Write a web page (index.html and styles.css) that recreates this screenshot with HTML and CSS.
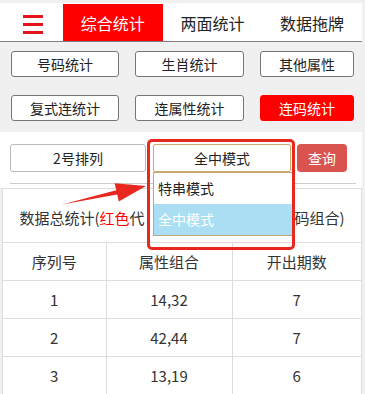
FILE: index.html
```html
<!DOCTYPE html>
<html>
<head lang="zh">
    <meta charset="UTF-8">
    <title>连码统计</title>
    <link rel="stylesheet" href="styles.css">
</head>
<body>
<div class="page">
    <div class="header">
        <div class="menu"><span></span><span></span><span></span></div>
        <a class="tab active">综合统计</a>
        <a class="tab">两面统计</a>
        <a class="tab">数据拖牌</a>
    </div>
    <div class="btns">
        <a class="btn">号码统计</a>
        <a class="btn">生肖统计</a>
        <a class="btn">其他属性</a>
        <a class="btn">复式连统计</a>
        <a class="btn">连属性统计</a>
        <a class="btn active">连码统计</a>
    </div>
    <div class="query">
        <div class="query-row">
            <div class="sel">2号排列</div>
            <div class="sel open">全中模式
                <ul class="options">
                    <li>特串模式</li>
                    <li class="on">全中模式</li>
                </ul>
            </div>
            <a class="btn-query">查询</a>
        </div>
        <div class="line"></div>
    </div>
    <div class="stat">
        <p class="stat-title">数据总统计(<span class="red">红色</span>代<span class="under">表总开出期数最多的号</span>码组合)</p>
        <table>
            <colgroup><col class="c1"><col class="c2"><col></colgroup>
            <tr><th>序列号</th><th>属性组合</th><th>开出期数</th></tr>
            <tr><td>1</td><td>14,32</td><td>7</td></tr>
            <tr><td>2</td><td>42,44</td><td>7</td></tr>
            <tr><td>3</td><td>13,19</td><td>6</td></tr>
        </table>
    </div>
    <div class="mark"></div>
    <svg class="arrow" width="160" height="220" viewBox="0 0 160 220">
        <path d="M62,201.5 L116.3,187.2 L114.6,180.3 L146,183 L118.8,198.6 L117.2,191.6 Z" fill="#e8281f"/>
    </svg>
</div>
</body>
</html>
```

FILE: styles.css
```css
*{
    margin: 0;
    padding: 0;
}
ul{
    list-style: none;
}
body{
    background: #f0f0f0;
    font-family: "Noto Sans CJK SC", "Noto Sans", sans-serif;
    color: #222;
    overflow: hidden;
}
.page{
    width: 362px;
    position: relative;
}
.header{
    display: flex;
    height: 37px;
    margin-top: 3px;
    padding-top: 1px;
    background: #fff;
    border-bottom: 1px solid #808080;
}
.menu{
    width: 63px;
    display: flex;
    flex-direction: column;
    align-items: center;
    justify-content: center;
    gap: 5px;
    padding: 3px 0 0 3px;
    box-sizing: border-box;
}
.menu span{
    width: 20px;
    height: 3px;
    background: #e3151c;
}
.tab{
    width: 100px;
    display: flex;
    align-items: center;
    justify-content: center;
    font-size: 16px;
    color: #222;
}
.tab.active{
    background: #f00;
    color: #fff;
}
.btns{
    display: grid;
    grid-template-columns: 108px 109px 94px;
    column-gap: 16px;
    row-gap: 18px;
    padding: 9px 0 11px 11px;
}
.btn{
    height: 26px;
    box-sizing: border-box;
    border: 1px solid #777;
    border-radius: 3px;
    background: #fff;
    font-size: 14px;
    line-height: 24px;
    text-align: center;
    color: #222;
}
.btn.active{
    background: #f00;
    border-color: #f00;
    color: #fff;
}
.query{
    background: #fff;
    padding: 12px 0 4px 10px;
}
.query-row{
    display: flex;
    gap: 7px;
}
.sel{
    width: 136px;
    height: 28px;
    box-sizing: border-box;
    border: 1px solid #bbb;
    border-radius: 3px;
    font-size: 14px;
    line-height: 26px;
    text-align: center;
    color: #222;
}
.sel.open{
    width: 138px;
    position: relative;
    border-color: #d3aa6c;
    border-radius: 2px;
}
.options{
    position: absolute;
    left: -1px;
    top: 27px;
    width: 138px;
    border: 1px solid #bca77c;
    background: #fff;
    text-align: left;
    z-index: 2;
}
.options li{
    height: 31px;
    line-height: 31px;
    padding-left: 4px;
    color: #222;
}
.options li.on{
    background: #a9def3;
    color: #fff;
}
.btn-query{
    width: 50px;
    height: 28px;
    margin-left: -1px;
    background: #d9534f;
    border-radius: 4px;
    color: #fff;
    font-size: 14px;
    line-height: 28px;
    text-align: center;
}
.line{
    width: 346px;
    height: 1px;
    margin-top: 11px;
    background: #ccc;
}
.stat{
    margin-left: 2px;
    background: #fff;
    border: 1px solid #ddd;
    border-bottom: 0;
}
.stat-title{
    padding: 18px 0 13px;
    font-size: 15px;
    line-height: 22px;
    text-align: center;
    color: #333;
}
.red{
    color: #f00;
}
/* covered by the open dropdown */
.under{
    visibility: hidden;
}
table{
    width: 100%;
    border-collapse: collapse;
    font-size: 15px;
    color: #333;
}
.c1{
    width: 103px;
}
.c2{
    width: 126px;
}
th, td{
    height: 37px;
    border: 1px solid #ddd;
    text-align: center;
    font-weight: normal;
}
th:first-child, td:first-child{
    border-left: 0;
}
th:last-child, td:last-child{
    border-right: 0;
}
.mark{
    position: absolute;
    left: 147px;
    top: 136px;
    width: 148px;
    height: 111px;
    box-sizing: border-box;
    border: 3px solid #e8281f;
    border-radius: 5px;
    z-index: 3;
}
.arrow{
    position: absolute;
    left: 0;
    top: 0;
    z-index: 3;
}
```
